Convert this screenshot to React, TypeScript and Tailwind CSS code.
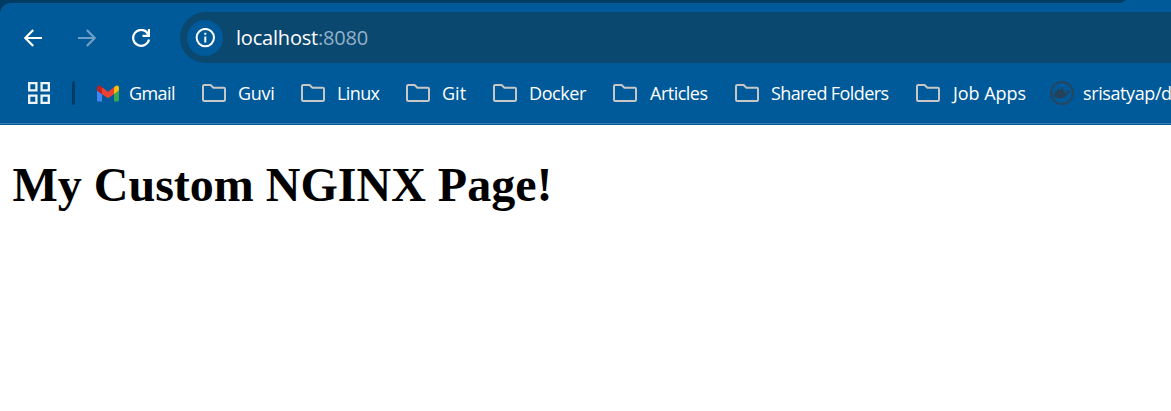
import type { ReactNode } from "react";

function FolderIcon() {
  return (
    <svg className="block shrink-0" width="24" height="18" viewBox="0 0 24 18" fill="none" stroke="#c7c7c7" strokeWidth="2" strokeLinejoin="round">
      <path d="M1 15.7V2.2Q1 1 2.2 1H8.6L11.4 3.8H21.8Q23 3.8 23 5V15.7Q23 17 21.8 17H2.2Q1 17 1 15.7Z" />
    </svg>
  );
}

function GmailIcon() {
  return (
    <svg className="block shrink-0" width="22" height="17" viewBox="0 0 22 17">
      <path fill="#4285f4" d="M0 5.5 5 9.2V16.5H1.5A1.5 1.5 0 0 1 0 15Z" />
      <path fill="#34a853" d="M17 9.2 22 5.5V15a1.5 1.5 0 0 1-1.5 1.5H17Z" />
      <path fill="#fbbc04" d="M17 2.3 18.6 1C20 .1 22 .8 22 2.7V5.5L17 9.2Z" />
      <path fill="#ea4335" d="M5 2.3 11 6.8 17 2.3V9.2L11 13.2 5 9.2Z" />
      <path fill="#c5221f" d="M0 2.7C0 .8 2 .1 3.4 1L5 2.3V9.2L0 5.5Z" />
    </svg>
  );
}

function DockerIcon() {
  return (
    <svg className="block shrink-0" width="24" height="24" viewBox="0 0 24 24">
      <circle cx="12" cy="12" r="11" fill="none" stroke="#24465f" strokeWidth="2" />
      <path fill="#26425a" d="M3.2 12.3H5V10.3H7V8.3H11V6.3H13.2V10.3H15V12.2C16.1 12.2 16.8 11.8 17.1 11.3 16.3 10.2 16.6 9 17.3 8.3 18 8.8 18.5 9.5 18.5 10.3 19.4 10.1 20.3 10.4 20.8 10.8 20.2 11.9 19.2 12.2 18.1 12.3 16.9 15.6 14.1 17.5 10 17.5 5.7 17.5 3.4 15.8 3.2 12.3Z" />
    </svg>
  );
}

function Bookmark({ icon, label, className, textClass }: { icon: ReactNode; label: string; className: string; textClass: string }) {
  return (
    <div className={`flex h-7 shrink-0 items-center whitespace-nowrap ${className}`}>
      {icon}
      <span className={`-mt-px ${textClass}`}>{label}</span>
    </div>
  );
}

const folders = [
  { label: "Guvi", className: "w-[99px] gap-3", textClass: "tracking-[-0.3px]" },
  { label: "Linux", className: "w-[105px] gap-3", textClass: "tracking-[-0.6px]" },
  { label: "Git", className: "w-[87px] gap-3", textClass: "tracking-[0px]" },
  { label: "Docker", className: "w-[120px] gap-3", textClass: "tracking-[-0.4px]" },
  { label: "Articles", className: "w-[122px] gap-[13px]", textClass: "tracking-[-0.5px]" },
  { label: "Shared Folders", className: "w-[181px] gap-3", textClass: "tracking-[-0.6px]" },
  { label: "Job Apps", className: "w-[134px] gap-[13px]", textClass: "tracking-[-0.05px]" },
];

export default function App() {
  return (
    <div className="h-[411px] w-full overflow-hidden bg-white">
      <header className="h-[125px] overflow-hidden bg-[#003c63] font-['Open_Sans',sans-serif] text-white">
        <div className="flex h-[3px] justify-end">
          <svg className="block" width="52" height="3" viewBox="0 0 52 3">
            <path fill="#005a99" d="M0 3C3 2.7 5 1.5 6.5 0H52V3Z" />
          </svg>
        </div>
        <div className="h-[122px] rounded-tl-[11px] bg-[#005a99] pt-[9px]">
          <div className="flex h-[51px] items-center">
            <svg className="ml-6 block shrink-0" width="18" height="18" viewBox="0 0 18 18" fill="none" stroke="white" strokeWidth="2.2">
              <path d="M18 9H1.5M9.2 .9 1.3 9l7.9 8.1" />
            </svg>
            <svg className="ml-9 block shrink-0" width="18" height="18" viewBox="0 0 18 18" fill="none" stroke="#6f9fc5" strokeWidth="2.2">
              <path d="M0 9h16.5M8.8 .9 16.7 9l-7.9 8.1" />
            </svg>
            <svg className="ml-9 block shrink-0" width="18" height="18" viewBox="0 0 18 18" fill="none" stroke="white" strokeWidth="2.2">
              <path d="M15.4 3.8A8 8 0 1 0 17 10.5M17 0V6.8H10.5M17 6.2 14.5 3.2" />
            </svg>
            <div className="ml-[30px] flex h-[51px] min-w-0 flex-1 items-center rounded-l-full bg-[#0a4870] pl-[7px]">
              <div className="flex h-9 w-9 shrink-0 items-center justify-center rounded-full bg-[#005a99]">
                <svg className="block" width="20" height="20" viewBox="0 0 20 20" fill="none" stroke="white" strokeWidth="2">
                  <circle cx="10.3" cy="9.6" r="8.7" />
                  <path d="M10.3 8.6V14.4M10.3 4.8V6.8" />
                </svg>
              </div>
              <span className="ml-[13px] text-[20px] leading-7 tracking-[-0.2px]">
                localhost<span className="text-[#94b1c8]">:8080</span>
              </span>
            </div>
          </div>
          <nav className="flex h-[60px] items-center text-[18px] leading-6">
            <svg className="ml-7 block shrink-0" width="22" height="22" viewBox="0 0 22 22" fill="none" stroke="#f1f4f7" strokeWidth="2.3">
              <path d="M1.2 1.2H8.4V8.4H1.2ZM13.6 1.2H20.8V8.4H13.6ZM1.2 13.6H8.4V20.8H1.2ZM13.6 13.6H20.8V20.8H13.6Z" />
            </svg>
            <div className="mr-6 ml-[22px] h-6 w-[3px] shrink-0 rounded-full bg-[#003c63]" />
            <Bookmark icon={<GmailIcon />} label="Gmail" className="-ml-[2px] w-[105px] gap-[10px]" textClass="tracking-[-0.6px]" />
            {folders.map((folder) => (
              <Bookmark key={folder.label} icon={<FolderIcon />} {...folder} />
            ))}
            <Bookmark icon={<DockerIcon />} label="srisatyap/d" className="gap-[9px]" textClass="tracking-[-0.4px]" />
          </nav>
          <div className="h-px bg-[#3b7fb1]" />
        </div>
      </header>
      <main className="px-[12.5px] pt-8">
        <h1 className="font-['Liberation_Serif',serif] text-[48px] leading-[55px] font-bold text-black">My Custom NGINX Page!</h1>
      </main>
    </div>
  );
}
